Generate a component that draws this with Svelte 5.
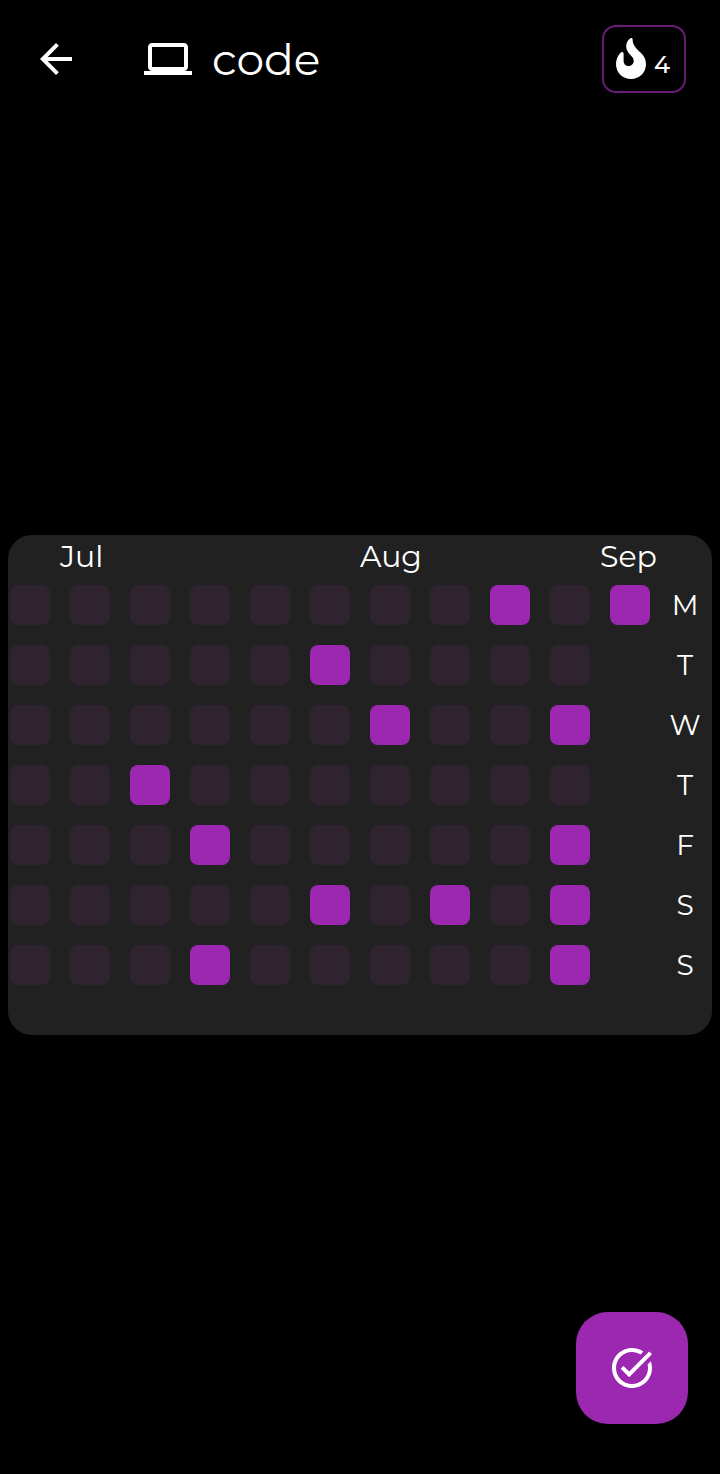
<script>
  const months = ['', 'Jul', '', '', '', '', 'Aug', '', '', '', 'Sep'];

  // One row per weekday: # done, . missed, blank = still to come
  const days = [
    { name: 'Monday', short: 'M', weeks: '........#.#' },
    { name: 'Tuesday', short: 'T', weeks: '.....#.... ' },
    { name: 'Wednesday', short: 'W', weeks: '......#..# ' },
    { name: 'Thursday', short: 'T', weeks: '..#....... ' },
    { name: 'Friday', short: 'F', weeks: '...#.....# ' },
    { name: 'Saturday', short: 'S', weeks: '.....#.#.# ' },
    { name: 'Sunday', short: 'S', weeks: '...#.....# ' }
  ];

  let rows = $state(days.map((d) => ({ ...d, weeks: [...d.weeks] })));
  let streak = $state(4);

  function toggle(row, week) {
    row.weeks[week] = row.weeks[week] === '#' ? '.' : '#';
  }
</script>

<div class="screen">
  <header>
    <button class="back" aria-label="Back">
      <svg viewBox="0 0 24 24"><path d="M20 11H7.83l5.59-5.59L12 4l-8 8 8 8 1.41-1.41L7.83 13H20v-2z" /></svg>
    </button>
    <svg class="laptop" viewBox="0 0 24 24" aria-hidden="true">
      <path d="M20 18c1.1 0 1.99-.9 1.99-2L22 6c0-1.1-.9-2-2-2H4c-1.1 0-2 .9-2 2v10c0 1.1.9 2 2 2H0v2h24v-2h-4zM4 6h16v10H4V6z" />
    </svg>
    <h1>code</h1>
    <div class="streak">
      <svg viewBox="0 0 30 41" aria-hidden="true">
        <path d="M14.500 .3C15.700-.2 16.600.4 16.600 1.400C16.700 7.500 20.500 10.500 24.500 14.500C28 18 30 21.300 30 26C30 34.500 23.500 41 15 41C6.500 41 0 34.500 0 26C0 21.300 1.800 17.600 4.700 14.500C5.700 13.500 7.600 14 7.600 15.500V23C7.600 26 9.900 28 12.600 28C15.500 28 17.700 25.800 17.700 23C17.700 19.500 15.700 18.300 13.500 15.900C11.400 13.600 10.200 11 10.200 8.200C10.200 4.800 11.800 1.800 14.500 .3Z" />
      </svg>
      <span>{streak}</span>
    </div>
  </header>

  <main>
    <section class="card">
      <table>
        <thead>
          <tr>
            {#each months as month}
              <th>{month}</th>
            {/each}
            <td></td>
          </tr>
        </thead>
        <tbody>
          {#each rows as row}
            <tr>
              {#each row.weeks as state, week}
                <td>
                  {#if state !== ' '}
                    <button
                      class="day"
                      class:done={state === '#'}
                      aria-pressed={state === '#'}
                      aria-label={row.name}
                      onclick={() => toggle(row, week)}
                    ></button>
                  {/if}
                </td>
              {/each}
              <th scope="row">{row.short}</th>
            </tr>
          {/each}
        </tbody>
      </table>
    </section>
  </main>

  <button class="check" aria-label="Mark today as done" onclick={() => (streak += 1)}>
    <svg viewBox="0 0 24 24"><path d="M22 5.180 10.590 16.600l-4.240-4.240 1.410-1.410 2.830 2.830 10-10L22 5.180zm-2.210 5.040c.13.57.21 1.170.21 1.780 0 4.420-3.580 8-8 8s-8-3.580-8-8 3.580-8 8-8c1.580 0 3.040.46 4.280 1.250l1.440-1.440C16.100 2.670 14.130 2 12 2 6.480 2 2 6.480 2 12s4.480 10 10 10 10-4.480 10-10c0-1.190-.22-2.330-.6-3.390l-1.610 1.610z" /></svg>
  </button>
</div>

<style>
  :global(body) {
    margin: 0;
    background: #000;
  }
  .screen {
    box-sizing: border-box;
    display: flex;
    flex-direction: column;
    min-height: 100vh;
    padding-bottom: 22px;
    background: #000;
    color: #fff;
    font-family: Montserrat, Inter, 'Open Sans', sans-serif;
    font-weight: 400;
  }
  svg {
    display: block;
    width: 48px;
    height: 48px;
    fill: currentColor;
  }
  button {
    display: block;
    padding: 0;
    border: 0;
    background: none;
    color: inherit;
    cursor: pointer;
  }
  header {
    box-sizing: border-box;
    display: flex;
    align-items: center;
    height: 118px;
    padding: 0 34px 0 32px;
  }
  .laptop {
    margin: 0 20px 0 64px;
  }
  h1 {
    flex: 1;
    margin: 0;
    font-size: 44px;
    line-height: 56px;
    font-weight: 400;
  }
  .streak {
    box-sizing: border-box;
    display: flex;
    align-items: center;
    gap: 8px;
    height: 68px;
    padding: 0 14px 2px 12px;
    border: 2px solid #6a1b78;
    border-radius: 14px;
    font-size: 24px;
    line-height: 32px;
    font-weight: 500;
  }
  .streak svg {
    width: 30px;
    height: 41px;
  }
  .streak span {
    padding-top: 14px;
  }
  main {
    flex: 1;
    display: flex;
    flex-direction: column;
    justify-content: center;
    padding: 0 8px;
  }
  .card {
    display: flex;
    justify-content: flex-end;
    overflow: hidden;
    padding: 0 2px 40px 0;
    border-radius: 24px;
    background: #212121;
  }
  table {
    flex: none;
    width: 710px;
    table-layout: fixed;
    border-collapse: collapse;
  }
  th,
  td {
    width: 60px;
    height: 60px;
    padding: 0;
    font-size: 28px;
    font-weight: 400;
  }
  tr > :last-child {
    width: 50px;
  }
  thead th,
  thead td {
    box-sizing: border-box;
    height: 40px;
  }
  thead th {
    padding-top: 4px;
    font-size: 30px;
    line-height: 36px;
    text-align: left;
    white-space: nowrap;
  }
  .day {
    width: 40px;
    height: 40px;
    margin: 0 auto;
    border-radius: 8px;
    background: #2f2330;
  }
  .day.done {
    background: #9c27b0;
  }
  .check {
    position: fixed;
    right: 32px;
    bottom: 50px;
    width: 112px;
    height: 112px;
    border-radius: 32px;
    background: #9c27b0;
  }
  .check svg {
    margin: 0 auto;
  }
</style>
